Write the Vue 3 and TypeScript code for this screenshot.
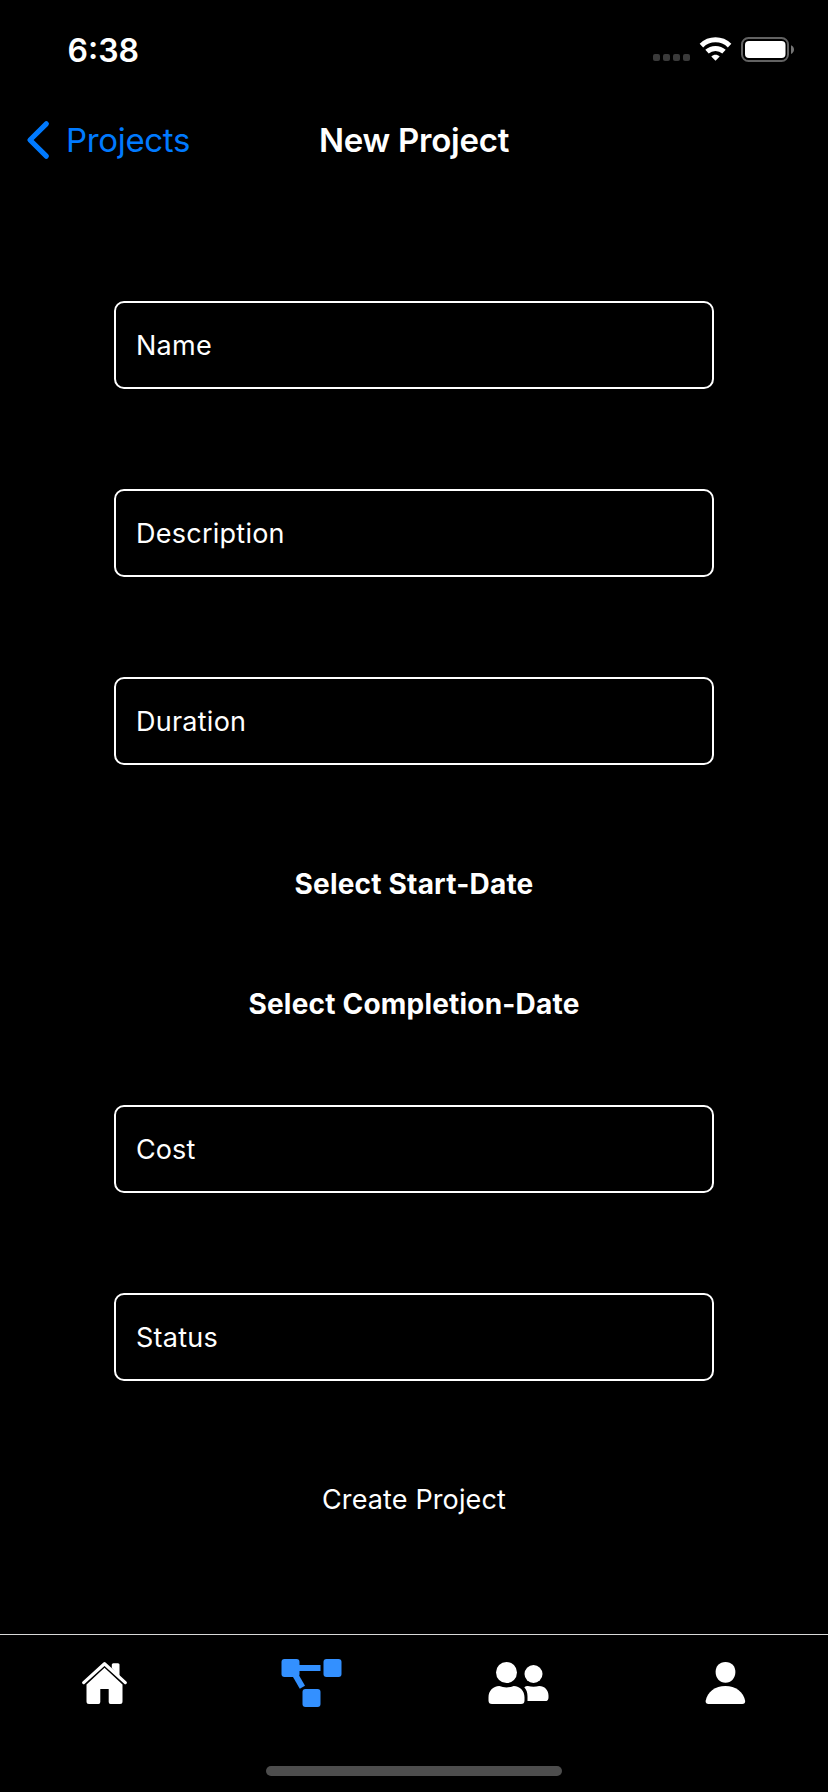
<script setup lang="ts">
import { reactive, ref } from 'vue'

interface Field {
  key: string
  label: string
}

const mainFields: Field[] = [
  { key: 'name', label: 'Name' },
  { key: 'description', label: 'Description' },
  { key: 'duration', label: 'Duration' },
]
const extraFields: Field[] = [
  { key: 'cost', label: 'Cost' },
  { key: 'status', label: 'Status' },
]
const form = reactive<Record<string, string>>({
  name: '', description: '', duration: '', cost: '', status: '',
})

const activeTab = ref('projects')
</script>

<template>
  <div class="screen">
    <header class="status-bar">
      <span class="time">6:38</span>
      <svg class="indicators" width="142" height="26" viewBox="0 0 142 26">
        <g fill="#3a3a3a">
          <rect v-for="n in 4" :key="n" :x="(n - 1) * 10" y="17" width="7" height="7" rx="2" />
        </g>
        <g fill="none" stroke="#fff" stroke-width="5">
          <path d="M48.4 8.6C56.3.9 68.7.9 76.6 8.6" />
          <path d="M54 14.7C58.7 10.3 66.3 10.3 71 14.7" />
        </g>
        <path d="M58.3 19.4C60.7 17.1 64.3 17.1 66.7 19.4L62.5 23.8Z" fill="#fff" />
        <rect x="89" y="1" width="46" height="23" rx="6.5" fill="none" stroke="#626262" stroke-width="2" />
        <rect x="92" y="4" width="40.5" height="17" rx="4" fill="#fff" />
        <path d="M138 8.3C142 10 142 15.3 138 17Z" fill="#747474" />
      </svg>
    </header>

    <nav class="nav-bar">
      <a class="back">
        <svg class="chevron" width="24" height="40" viewBox="0 0 24 40">
          <path d="M20.3 3.8L4 20L20.3 36.2" fill="none" stroke="#007aff" stroke-width="5.2" stroke-linecap="round" stroke-linejoin="round" />
        </svg>
        <span class="back-label">Projects</span>
      </a>
      <h1 class="title">New Project</h1>
    </nav>

    <main class="form">
      <input v-for="f in mainFields" :key="f.key" v-model="form[f.key]" class="field" :class="f.key" :placeholder="f.label">
      <div class="dates">
        <button class="link bold" type="button">Select Start-Date</button>
        <button class="link bold" type="button">Select Completion-Date</button>
      </div>
      <input v-for="f in extraFields" :key="f.key" v-model="form[f.key]" class="field" :class="f.key" :placeholder="f.label">
      <button class="link create" type="button">Create Project</button>
    </main>

    <footer class="tab-bar">
      <button class="tab" type="button" :class="{ active: activeTab === 'home' }" @click="activeTab = 'home'">
        <svg class="icon" viewBox="0 0 60 48">
          <path d="M9.7 23.6L30.5 4.7L51.3 23.6" fill="none" stroke="currentColor" stroke-width="3.2" stroke-linecap="round" stroke-linejoin="round" />
          <path d="M37.8 9V5.8Q37.8 4.3 39.3 4.3H44Q45.5 4.3 45.5 5.8V18Z" fill="currentColor" />
          <path d="M30.5 8.8L48.5 25.4V42.5Q48.5 45 46 45H36.5Q34.7 45 34.7 43V30H26.3V43Q26.3 45 24.5 45H15Q12.5 45 12.5 42.5V25.4Z" fill="currentColor" />
        </svg>
      </button>
      <button class="tab" type="button" :class="{ active: activeTab === 'projects' }" @click="activeTab = 'projects'">
        <svg class="icon" viewBox="0 0 60 48">
          <g fill="currentColor">
            <rect x=".5" y="0" width="18" height="18" rx="3" />
            <rect x="42.5" y="0" width="18" height="18" rx="3" />
            <rect x="21.5" y="30" width="18" height="18" rx="3" />
            <rect x="15" y="6" width="24.5" height="6" />
          </g>
          <path d="M12.3 12.4L21.4 28.3" stroke="currentColor" stroke-width="6" />
        </svg>
      </button>
      <button class="tab" type="button" :class="{ active: activeTab === 'team' }" @click="activeTab = 'team'">
        <svg class="icon" viewBox="0 0 60 48">
          <g fill="currentColor">
            <circle cx="18.5" cy="13.5" r="10.5" />
            <path d="M11.3 27Q18.5 29.8 25.7 27C32 27 36.5 32 36.5 38.2V41.5Q36.5 45 33 45H4Q.5 45 .5 41.5V38.2C.5 32 5 27 11.3 27Z" />
            <circle cx="45.5" cy="15" r="9" />
            <path d="M36.3 28.2Q37.7 27 39.8 27Q45.5 28.6 51.2 27C56.6 27 60.5 31.2 60.5 36.5V38.4Q60.5 42 57 42H39.5V37.5C39.5 33.5 38.5 30.7 36.3 28.2Z" />
          </g>
        </svg>
      </button>
      <button class="tab" type="button" :class="{ active: activeTab === 'profile' }" @click="activeTab = 'profile'">
        <svg class="icon" viewBox="0 0 60 48">
          <g fill="currentColor">
            <path d="M30.5 3C36.6 3 40.4 7.3 40.4 13C40.4 19 36.2 23.8 30.5 23.8C24.8 23.8 20.6 19 20.6 13C20.6 7.3 24.4 3 30.5 3Z" />
            <path d="M30.4 27C40.5 27 48.5 32.7 50.2 42Q50.3 45 47.2 45H13.6Q10.5 45 10.6 42C12.3 32.7 20.3 27 30.4 27Z" />
          </g>
        </svg>
      </button>
      <div class="home-indicator"></div>
    </footer>
  </div>
</template>

<style>
body {
  background: #000;
}
</style>

<style scoped>
.screen {
  display: flex;
  flex-direction: column;
  width: 828px;
  height: 1792px;
  background: #000;
  color: #fff;
  font-family: Inter, "Liberation Sans", sans-serif;
  overflow: hidden;
}

.status-bar {
  display: flex;
  justify-content: space-between;
  align-items: center;
  box-sizing: border-box;
  height: 99px;
  padding: 0 33px 0 67.5px;
}

.time {
  padding-top: 1px;
  font-size: 32px;
  font-weight: 600;
}

.nav-bar {
  display: grid;
  grid-template-columns: 1fr auto 1fr;
  align-items: center;
  height: 82px;
  padding: 0 26px;
}

.back {
  display: flex;
  align-items: center;
  gap: 16px;
  color: #007aff;
}

.back-label {
  font-size: 33px;
  letter-spacing: -0.33px;
}

.title {
  margin: 0;
  font-size: 33px;
  font-weight: 600;
  letter-spacing: -0.25px;
}

.form {
  display: flex;
  flex: 1;
  flex-direction: column;
  align-items: center;
  gap: 100px;
  padding-top: 120px;
}

.field {
  flex: none;
  box-sizing: border-box;
  width: 600px;
  height: 88px;
  padding: 0 20px;
  border: 2px solid #fff;
  border-radius: 10px;
  outline: none;
  background: transparent;
  color: #fff;
  font: 400 27px Inter, "Liberation Sans", sans-serif;
  letter-spacing: 0.25px;
}

.field.cost {
  letter-spacing: 0.1px;
}

.field::placeholder {
  color: #fff;
  opacity: 1;
}

.dates {
  display: flex;
  flex-direction: column;
  align-items: center;
  gap: 84px;
  margin-bottom: -16px;
}

.link {
  height: 36px;
  padding: 2px 0 0;
  border: 0;
  background: none;
  color: #fff;
  font: 400 27px/34px Inter, "Liberation Sans", sans-serif;
  letter-spacing: 0.13px;
}

.link.bold {
  font-size: 28px;
  font-weight: 700;
  letter-spacing: 0.2px;
}

.tab-bar {
  display: grid;
  grid-template-columns: repeat(4, 1fr);
  grid-template-rows: 96px 10px;
  row-gap: 35px;
  box-sizing: border-box;
  height: 158px;
  border-top: 1px solid #d8d9d8;
}

.tab {
  display: flex;
  justify-content: center;
  align-items: center;
  padding: 0;
  border: 0;
  background: none;
  color: #fff;
}

.tab.active {
  color: #3390ff;
}

.icon {
  width: 60px;
  height: 48px;
  overflow: visible;
}

.home-indicator {
  grid-column: 1 / -1;
  justify-self: center;
  width: 296px;
  height: 10px;
  border-radius: 5px;
  background: #4d4d4d;
}
</style>
